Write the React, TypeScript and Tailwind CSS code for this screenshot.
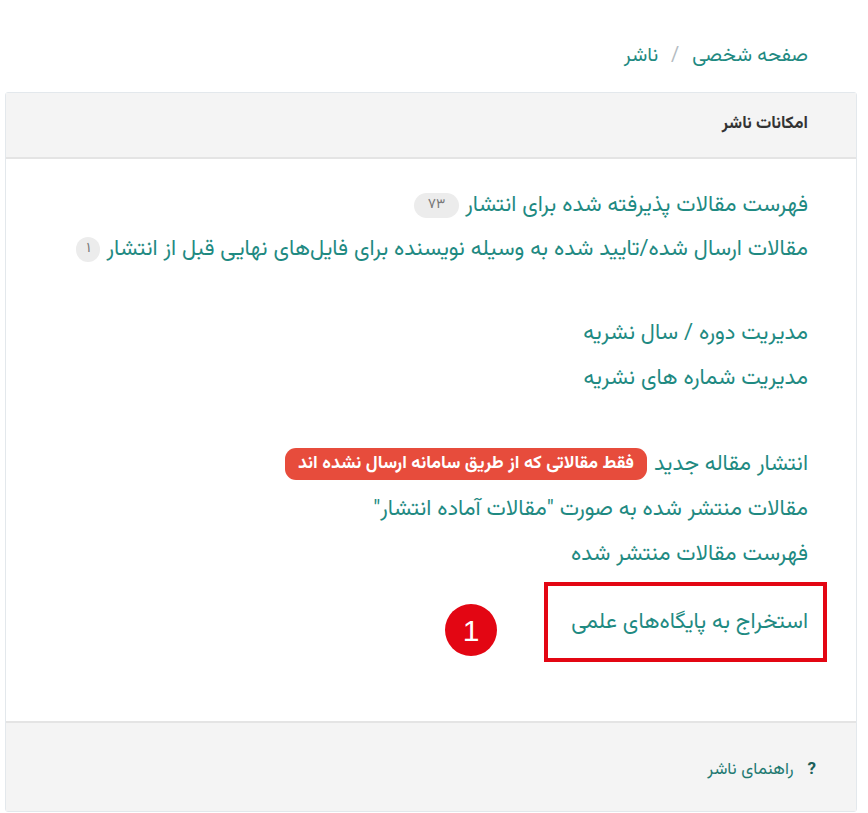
import React from "react";

const font = { fontFamily: '"Vazirmatn", "Noto Sans Arabic", "Noto Naskh Arabic", "DejaVu Sans", sans-serif' };

export default function App() {
  return (
    <div dir="rtl" className="bg-white w-[868px] h-[813px] overflow-hidden" style={font}>
      <div className="h-[92px] flex items-center pr-[60px] pt-[20px] text-[20px] text-[#1f8a82]">
        <span>صفحه شخصی</span>
        <span className="mx-[13px] text-[#b5bcc2]">/</span>
        <span>ناشر</span>
      </div>
      <div className="mr-[11px] w-[852px] border border-[#e3e8ec] rounded-[3px] flex flex-col h-[720px]">
        <div className="h-[66px] bg-[#f4f4f4] border-b-2 border-[#e4e4e4] flex items-center pr-[48px] text-[17px] font-bold text-[#333]">
          امکانات ناشر
        </div>
        <div className="flex-1 pr-[48px] pt-[25px] text-[22px] text-[#1f8a82]">
          <div className="h-[43px] flex items-center gap-[6px]">
            <span>فهرست مقالات پذیرفته شده برای انتشار</span>
            <span className="bg-[#ececec] text-[#777] text-[14px] rounded-full h-[25px] px-[14px] flex items-center">۷۳</span>
          </div>
          <div className="h-[45px] flex items-center gap-[6px]">
            <span>مقالات ارسال شده/تایید شده به وسیله نویسنده برای فایل‌های نهایی قبل از انتشار</span>
            <span className="bg-[#ececec] text-[#777] text-[14px] rounded-full h-[25px] px-[10px] flex items-center">۱</span>
          </div>
          <div className="h-[38px]" />
          <div className="h-[46px] flex items-center">مدیریت دوره / سال نشریه</div>
          <div className="h-[45px] flex items-center">مدیریت شماره های نشریه</div>
          <div className="h-[40px]" />
          <div className="h-[46px] flex items-center gap-[7px]">
            <span>انتشار مقاله جدید</span>
            <span className="bg-[#e74c3c] text-white text-[18px] font-bold rounded-[11px] h-[32px] px-[13px] flex items-center">فقط مقالاتی که از طریق سامانه ارسال نشده اند</span>
          </div>
          <div className="h-[45px] flex items-center">مقالات منتشر شده به صورت "مقالات آماده انتشار"</div>
          <div className="h-[45px] flex items-center">فهرست مقالات منتشر شده</div>
          <div className="flex items-center mt-[5px] -mr-[19px]">
            <div className="w-[283px] h-[80px] border-[4px] border-[#e30613] flex items-center pr-[15px]">
              استخراج به پایگاه‌های علمی
            </div>
            <div className="mr-[47px] mt-[16px] w-[52px] h-[52px] rounded-full bg-[#e30613] text-white flex items-center justify-center text-[30px]" style={{ fontFamily: '"Liberation Sans", Arial, sans-serif' }}>1</div>
          </div>
        </div>
        <div className="h-[90px] bg-[#f4f4f4] border-t-2 border-[#e4e4e4] flex items-center pr-[40px] pt-[8px] gap-[14px] text-[17px]">
          <span className="font-bold text-[#1d5f5a] text-[17px]">?</span>
          <span className="text-[#1f7a72]">راهنمای ناشر</span>
        </div>
      </div>
    </div>
  );
}
